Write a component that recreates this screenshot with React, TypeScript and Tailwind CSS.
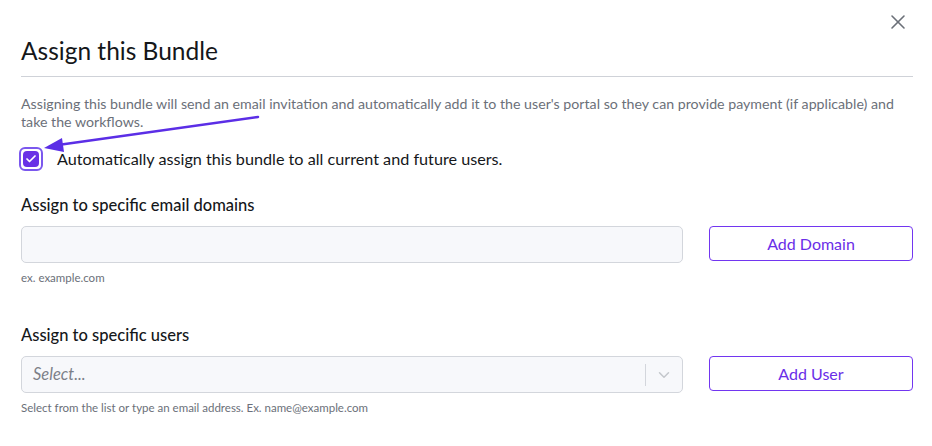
import { X, Check, ChevronDown } from "lucide-react";

// Assign bundle modal — domains + users assignment.

const font = { fontFamily: "Lato, 'Liberation Sans', sans-serif" };

export default function App() {
  return (
    <div className="relative h-[446px] w-[932px] bg-white text-[#1f2328]" style={font}>
      <button className="absolute right-[22px] top-[10px] text-[#6b7078]">
        <X size={24} strokeWidth={1.6} />
      </button>

      <div className="pl-[21px] pr-[19px] pt-[36px]">
        <h2 className="text-[24.5px] leading-[30px] text-[#15171a]">Assign this Bundle</h2>
        <div className="mt-[10px] h-px bg-[#cfd2d8]" />

        <p className="mt-[18px] text-[14.2px] leading-[18px] text-[#6b7079]">
          Assigning this bundle will send an email invitation and automatically add it to the user's
          portal so they can provide payment (if applicable) and take the workflows.
        </p>

        <label className="relative mt-[16px] flex items-center gap-[14px]">
          <span className="-ml-[2px] flex h-[24px] w-[24px] shrink-0 items-center justify-center rounded-[6px] border-2 border-[#7b58ee] bg-white p-[2px]">
            <span className="flex h-full w-full items-center justify-center rounded-[4px] bg-[#6931e6]">
              <Check size={12} strokeWidth={3.5} className="text-white" />
            </span>
          </span>
          <span className="text-[16.2px] text-[#15171a]">
            Automatically assign this bundle to all current and future users.
          </span>
        </label>

        <div className="mt-[22px] text-[16.5px] font-medium text-[#15171a]">
          Assign to specific email domains
        </div>
        <div className="mt-[8px] flex items-start gap-[26px]">
          <input className="h-[37px] flex-1 rounded-[5px] border border-[#d3d6dc] bg-[#f7f8fb] px-3 outline-none" />
          <button className="h-[35px] w-[204px] rounded-[4px] border-[1.5px] border-[#7236f0] text-[16px] text-[#6a2ee8]">
            Add Domain
          </button>
        </div>
        <div className="mt-[6px] text-[11.5px] text-[#6b7079]">ex. example.com</div>

        <div className="mt-[37px] text-[16.5px] font-medium text-[#15171a]">
          Assign to specific users
        </div>
        <div className="mt-[8px] flex items-start gap-[26px]">
          <div className="flex h-[37px] flex-1 items-center rounded-[5px] border border-[#d3d6dc] bg-[#f7f8fb]">
            <span className="flex-1 pl-[11px] text-[16.5px] italic text-[#7c8088]">Select...</span>
            <span className="h-[22px] w-px bg-[#d3d6dc]" />
            <span className="flex w-[36px] justify-center text-[#c4c7cc]">
              <ChevronDown size={18} strokeWidth={2} />
            </span>
          </div>
          <button className="h-[35px] w-[204px] rounded-[4px] border-[1.5px] border-[#7236f0] text-[16px] text-[#6a2ee8]">
            Add User
          </button>
        </div>
        <div className="mt-[6px] text-[11.5px] text-[#6b7079]">
          Select from the list or type an email address. Ex. name@example.com
        </div>
      </div>

      <svg className="pointer-events-none absolute left-0 top-0" width="932" height="446">
        <line x1="258" y1="117" x2="58" y2="145" stroke="#5b2ee6" strokeWidth="2.5" strokeLinecap="round" />
        <polygon points="44,148 62,138 64,152" fill="#5b2ee6" />
      </svg>
    </div>
  );
}
